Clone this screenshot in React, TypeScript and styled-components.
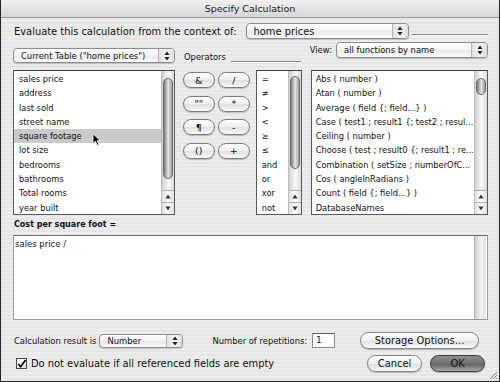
import React from 'react';
import styled, { createGlobalStyle } from 'styled-components';

const fields = [
    "sales price", "address", "last sold", "street name", "square footage",
    "lot size", "bedrooms", "bathrooms", "Total rooms", "year built",
];

const operators = ["=", "≠", ">", "<", "≥", "≤", "and", "or", "xor", "not"];

const functions = [
    "Abs ( number )",
    "Atan ( number )",
    "Average ( field {; field...} )",
    "Case ( test1 ; result1 {; test2 ; resul...",
    "Ceiling ( number )",
    "Choose ( test ; result0 {; result1 ; re...",
    "Combination ( setSize ; numberOfC...",
    "Cos ( angleInRadians )",
    "Count ( field {; field...} )",
    "DatabaseNames",
];

const opButtons = ["&", "/", "\"\"", "*", "¶", "-", "()", "+"];

const GlobalStyle = createGlobalStyle`
    html, body {
        margin: 0;
        padding: 0;
        background: #ffffff;
    }
    body {
        font-family: "DejaVu Sans", "Noto Sans", sans-serif;
        color: #111;
    }
`;

const Window = styled.div`
    position: relative;
    width: 500px;
    height: 382px;
    box-sizing: border-box;
    border: 1px solid #262626;
    border-top: none;
    background: repeating-linear-gradient(to bottom, #ececec 0, #ececec 2px, #e6e6e6 2px, #e6e6e6 4px);
    display: flex;
    flex-direction: column;
    overflow: hidden;
`;

const TitleBar = styled.div`
    height: 17px;
    border-bottom: 1px solid #9a9a9a;
    background: linear-gradient(to bottom, #f0f0f0, #d6d6d6);
    display: flex;
    align-items: center;
    justify-content: center;
    font-size: 9.5px;
    color: #1a1a1a;
`;

const Body = styled.div`
    flex: 1;
    display: flex;
    flex-direction: column;
    padding: 0 11px 0 12px;
`;

const ContextRow = styled.div`
    margin-top: 5px;
    height: 16px;
    display: flex;
    align-items: center;
`;

const BigLabel = styled.span`
    font-size: 9.9px;
    white-space: nowrap;
    padding-left: 1px;
`;

const SmallLabel = styled.span<{ $ml?: number }>`
    font-size: 8.4px;
    white-space: nowrap;
    margin-left: ${p => p.$ml ?? 0}px;
`;

const Rule = styled.div<{ $ml?: number; $mb?: number }>`
    flex: 1 1 auto;
    min-width: 10px;
    align-self: flex-end;
    height: 1px;
    background: #888888;
    box-shadow: 0 1px 0 #fafafa;
    margin-left: ${p => p.$ml ?? 0}px;
    margin-bottom: ${p => p.$mb ?? 0}px;
`;

const SourceRow = styled.div`
    margin-top: 3px;
    height: 21px;
    display: flex;
    align-items: flex-start;
`;

const OperatorsHead = styled.div`
    width: 118px;
    margin-left: 9px;
    margin-top: 9px;
    height: 12px;
    display: flex;
    align-items: center;
`;

const ViewGroup = styled.div`
    margin-left: 9px;
    display: flex;
    align-items: center;
    height: 16px;
`;

const PopupBox = styled.div<{ $w: number; $h: number; $mt?: number; $ml?: number }>`
    flex: none;
    width: ${p => p.$w}px;
    height: ${p => p.$h}px;
    margin-top: ${p => p.$mt ?? 0}px;
    margin-left: ${p => p.$ml ?? 0}px;
    box-sizing: border-box;
    border: 1px solid #8c8c8c;
    border-radius: 4px;
    background: linear-gradient(to bottom, #ffffff, #f3f3f3 50%, #e9e9e9 51%, #fafafa);
    box-shadow: 0 1px 1px rgba(0, 0, 0, 0.18);
    display: flex;
    align-items: center;
    overflow: hidden;
`;

const PopupText = styled.span<{ $size: number }>`
    flex: 1;
    padding-left: 7px;
    font-size: ${p => p.$size}px;
    white-space: nowrap;
    overflow: hidden;
`;

const Stepper = styled.div`
    width: 15px;
    align-self: stretch;
    border-left: 1px solid #b4b4b4;
    background: linear-gradient(to right, #e2e2e2, #f6f6f6 50%, #dcdcdc);
    display: flex;
    align-items: center;
    justify-content: center;
`;

const ListsRow = styled.div`
    margin-top: 7px;
    height: 145px;
    display: flex;
`;

const ListBox = styled.div<{ $w?: number; $ml?: number }>`
    position: relative;
    ${p => (p.$w ? `width: ${p.$w}px;` : 'flex: 1;')}
    margin-left: ${p => p.$ml ?? 0}px;
    box-sizing: border-box;
    border: 1px solid #5a5a5a;
    border-top-color: #3c3c3c;
    background: #fff;
    display: flex;
`;

const Items = styled.div`
    flex: 1;
    padding-top: 1px;
    overflow: hidden;
`;

const Item = styled.div<{ $selected?: boolean; $indent: number }>`
    height: 14.3px;
    line-height: 14.3px;
    padding-left: ${p => p.$indent}px;
    font-size: 8.3px;
    white-space: nowrap;
    background: ${p => (p.$selected ? '#cacaca' : 'transparent')};
`;

const ScrollBar = styled.div`
    width: 12px;
    display: flex;
    flex-direction: column;
    border-left: 1px solid #bdbdbd;
    background: linear-gradient(to right, #cfcfcf, #f2f2f2 45%, #f8f8f8 55%, #d9d9d9);
`;

const Track = styled.div`
    flex: 1;
    padding-top: 1px;
`;

const Thumb = styled.div<{ $top: number; $len: number }>`
    margin-top: ${p => p.$top}px;
    height: ${p => p.$len}px;
    margin-left: 1px;
    width: 10px;
    box-sizing: border-box;
    border: 1px solid #6c6c6c;
    border-radius: 5px;
    background: linear-gradient(to right, #7a7a7a, #c4c4c4 35%, #e4e4e4 55%, #9a9a9a);
`;

const ScrollArrow = styled.div`
    height: 11px;
    border-top: 1px solid #b3b3b3;
    display: flex;
    align-items: center;
    justify-content: center;
    background: linear-gradient(to right, #e0e0e0, #fafafa 50%, #e0e0e0);
`;

const OpGrid = styled.div`
    margin-left: 8px;
    margin-top: 2px;
    display: grid;
    grid-template-columns: 32px 32px;
    grid-auto-rows: 16px;
    column-gap: 3px;
    row-gap: 7.5px;
    align-content: start;
`;

const OpButton = styled.div`
    box-sizing: border-box;
    border: 1px solid #7e7e7e;
    border-radius: 8px;
    background: linear-gradient(to bottom, #ffffff, #eeeeee 50%, #e0e0e0 51%, #f7f7f7);
    box-shadow: 0 1px 1px rgba(0, 0, 0, 0.2);
    display: flex;
    align-items: center;
    justify-content: center;
    font-size: 9.5px;
    color: #111;
`;

const FormulaLabel = styled.div`
    margin-top: 3px;
    height: 14px;
    line-height: 14px;
    padding-left: 1px;
    font-size: 8px;
    font-weight: bold;
`;

const FormulaBox = styled.div`
    margin-top: 3px;
    height: 85px;
    box-sizing: border-box;
    border: 1px solid #9a9a9a;
    border-top-color: #6a6a6a;
    background: #fff;
    display: flex;
`;

const FormulaText = styled.div`
    flex: 1;
    padding: 2px 0 0 1px;
    font-size: 8.5px;
    line-height: 12px;
`;

const EmptyTrack = styled.div`
    width: 11px;
    margin-right: 1px;
    border-left: 1px solid #b0b0b0;
    background: linear-gradient(to right, #cfcfcf, #efefef 50%, #e4e4e4);
`;

const ResultRow = styled.div`
    margin-top: 12px;
    height: 17px;
    display: flex;
    align-items: center;
`;

const NumberInput = styled.div`
    width: 23px;
    height: 15px;
    margin-left: 5px;
    box-sizing: border-box;
    border: 1px solid #8a8a8a;
    border-top-color: #5e5e5e;
    background: #fff;
    font-size: 8.5px;
    line-height: 13px;
    padding-left: 3px;
`;

const PushButton = styled.div<{ $w: number; $ml?: number; $default?: boolean }>`
    width: ${p => p.$w}px;
    height: 17px;
    margin-left: ${p => (p.$ml === undefined ? 'auto' : `${p.$ml}px`)};
    box-sizing: border-box;
    border: 1px solid ${p => (p.$default ? '#3c3c3c' : '#858585')};
    border-radius: 9px;
    background: ${p =>
        p.$default
            ? 'linear-gradient(to bottom, #8e8e8e, #707070 50%, #5e5e5e 51%, #a8a8a8)'
            : 'linear-gradient(to bottom, #ffffff, #efefef 50%, #e1e1e1 51%, #f8f8f8)'};
    box-shadow: 0 1px 1px rgba(0, 0, 0, 0.25);
    display: flex;
    align-items: center;
    justify-content: center;
    font-size: 9.9px;
    color: #111;
    white-space: nowrap;
`;

const ActionRow = styled.div`
    margin-top: 6px;
    height: 17px;
    display: flex;
    align-items: center;
    padding-right: 3px;
`;

const CheckBox = styled.div`
    width: 11px;
    height: 11px;
    margin-left: 3px;
    margin-right: 3px;
    box-sizing: border-box;
    border: 1px solid #4a4a4a;
    background: linear-gradient(to bottom, #ffffff, #dcdcdc);
    display: flex;
    align-items: center;
    justify-content: center;
`;

const Pointer = styled.svg`
    position: absolute;
    left: 78px;
    top: 62px;
`;

const Grip = styled.svg`
    position: absolute;
    right: 1px;
    bottom: 1px;
`;

const UpDown: React.FC = () => (
    <svg width="6" height="10" viewBox="0 0 6 10">
        <path d="M3 0.5 L5.6 4 L0.4 4 Z" fill="#222" />
        <path d="M3 9.5 L5.6 6 L0.4 6 Z" fill="#222" />
    </svg>
);

const Tri: React.FC<{ down?: boolean }> = ({ down }) => (
    <svg width="6" height="5" viewBox="0 0 6 5">
        <path d={down ? "M0.5 0.5 L5.5 0.5 L3 4.5 Z" : "M3 0.5 L5.5 4.5 L0.5 4.5 Z"} fill="#333" />
    </svg>
);

const Popup: React.FC<{ w: number; h: number; text: string; size: number; mt?: number; ml?: number }> = ({ w, h, text, size, mt, ml }) => (
    <PopupBox $w={w} $h={h} $mt={mt} $ml={ml}>
        <PopupText $size={size}>{text}</PopupText>
        <Stepper><UpDown /></Stepper>
    </PopupBox>
);

const Scroller: React.FC<{ top: number; len: number }> = ({ top, len }) => (
    <ScrollBar>
        <Track><Thumb $top={top} $len={len} /></Track>
        <ScrollArrow><Tri /></ScrollArrow>
        <ScrollArrow><Tri down /></ScrollArrow>
    </ScrollBar>
);

const SpecifyCalculation: React.FC = () => {
    return (
        <>
            <GlobalStyle />
            <Window>
                <TitleBar>Specify Calculation</TitleBar>
                <Body>
                    <ContextRow>
                        <BigLabel>Evaluate this calculation from the context of:</BigLabel>
                        <Popup w={163} h={16} text="home prices" size={9.9} ml={9} />
                        <Rule $ml={3} $mb={4} />
                    </ContextRow>

                    <SourceRow>
                        <Popup w={162} h={15} text={'Current Table ("home prices")'} size={8.4} mt={6} />
                        <OperatorsHead>
                            <SmallLabel>Operators</SmallLabel>
                            <Rule $ml={5} $mb={1} />
                        </OperatorsHead>
                        <ViewGroup>
                            <SmallLabel>View:</SmallLabel>
                            <Popup w={152} h={16} text="all functions by name" size={8.4} ml={4} />
                        </ViewGroup>
                    </SourceRow>

                    <ListsRow>
                        <ListBox $w={162}>
                            <Items>
                                {fields.map(f => (
                                    <Item key={f} $indent={5} $selected={f === "square footage"}>{f}</Item>
                                ))}
                            </Items>
                            <Scroller top={6} len={101} />
                            <Pointer width="9" height="13" viewBox="0 0 9 13">
                                <path d="M1 0.8 L1 10.5 L3.4 8.3 L5.2 12.3 L6.8 11.6 L5.1 7.7 L8.3 7.7 Z" fill="#000" stroke="#fff" strokeWidth="0.8" />
                            </Pointer>
                        </ListBox>

                        <OpGrid>
                            {opButtons.map(b => (
                                <OpButton key={b}>{b}</OpButton>
                            ))}
                        </OpGrid>

                        <ListBox $w={46} $ml={6}>
                            <Items>
                                {operators.map(o => (
                                    <Item key={o} $indent={5}>{o}</Item>
                                ))}
                            </Items>
                            <Scroller top={4} len={93} />
                        </ListBox>

                        <ListBox $ml={9}>
                            <Items>
                                {functions.map(fn => (
                                    <Item key={fn} $indent={4}>{fn}</Item>
                                ))}
                            </Items>
                            <Scroller top={6} len={17} />
                        </ListBox>
                    </ListsRow>

                    <FormulaLabel>Cost per square foot =</FormulaLabel>
                    <FormulaBox>
                        <FormulaText>sales price /</FormulaText>
                        <EmptyTrack />
                    </FormulaBox>

                    <ResultRow>
                        <SmallLabel $ml={1}>Calculation result is</SmallLabel>
                        <Popup w={84} h={14} text="Number" size={8.4} ml={3} />
                        <SmallLabel $ml={29}>Number of repetitions:</SmallLabel>
                        <NumberInput>1</NumberInput>
                        <PushButton $w={119} $ml={25}>Storage Options…</PushButton>
                    </ResultRow>

                    <ActionRow>
                        <CheckBox>
                            <svg width="10" height="10" viewBox="0 0 10 10">
                                <path d="M1.5 5 L4 8 L9.5 0.5" fill="none" stroke="#000" strokeWidth="1.8" />
                            </svg>
                        </CheckBox>
                        <BigLabel>Do not evaluate if all referenced fields are empty</BigLabel>
                        <PushButton $w={55}>Cancel</PushButton>
                        <PushButton $w={55} $ml={8} $default>OK</PushButton>
                    </ActionRow>
                </Body>
                <Grip width="10" height="10" viewBox="0 0 10 10">
                    <path d="M9 2 L2 9 M9 5 L5 9 M9 8 L8 9" stroke="#8a8a8a" strokeWidth="1" />
                </Grip>
            </Window>
        </>
    );
};

export default SpecifyCalculation;
